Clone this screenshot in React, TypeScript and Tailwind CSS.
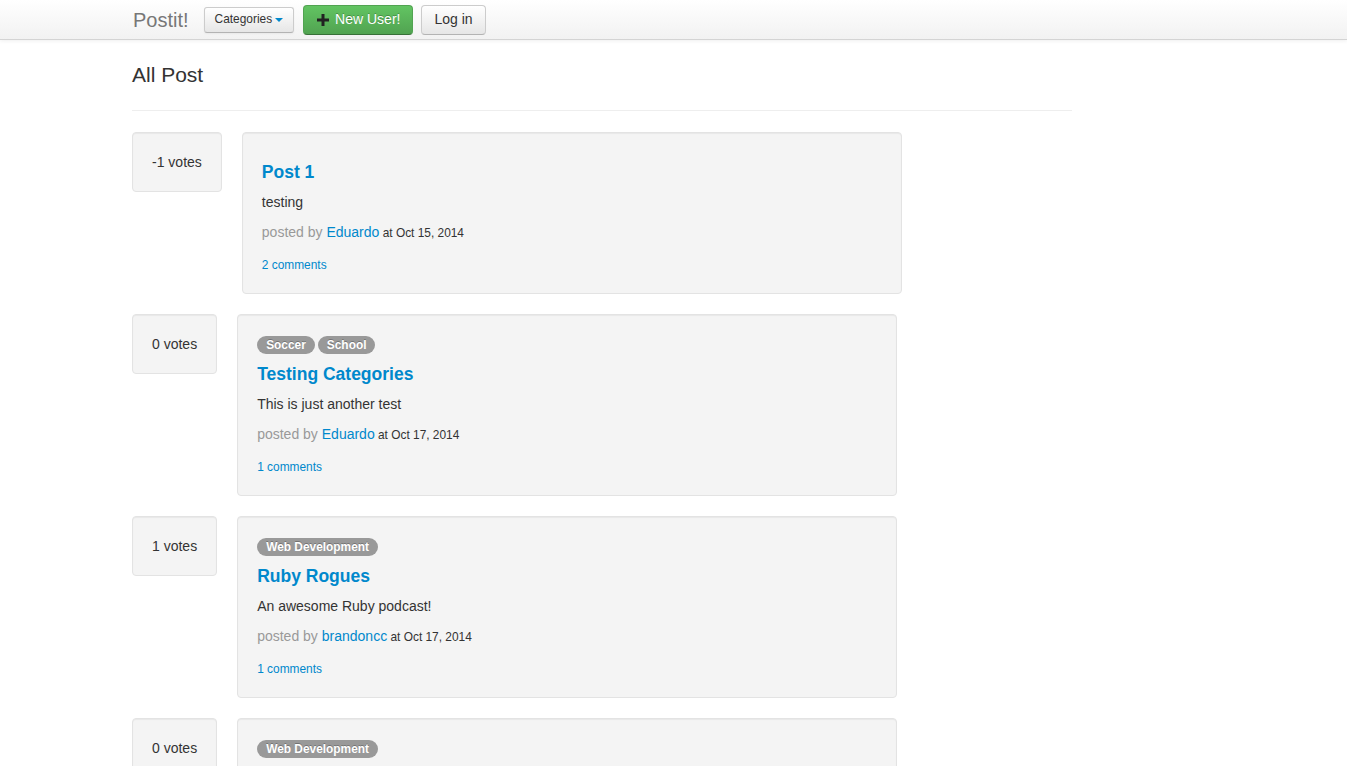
import { ReactNode } from "react";

type Post = {
  votes: number;
  title: string;
  body: string;
  author: string;
  date: string;
  comments: number;
  categories: string[];
};

const posts: Post[] = [
  { votes: -1, title: "Post 1", body: "testing", author: "Eduardo", date: "Oct 15, 2014", comments: 2, categories: [] },
  { votes: 0, title: "Testing Categories", body: "This is just another test", author: "Eduardo", date: "Oct 17, 2014", comments: 1, categories: ["Soccer", "School"] },
  { votes: 1, title: "Ruby Rogues", body: "An awesome Ruby podcast!", author: "brandoncc", date: "Oct 17, 2014", comments: 1, categories: ["Web Development"] },
  { votes: 0, title: "Rails Guides", body: "Ruby on Rails guides", author: "brandoncc", date: "Oct 17, 2014", comments: 0, categories: ["Web Development"] },
];

function Well({ className, children }: { className?: string; children: ReactNode }) {
  return (
    <div
      className={
        "rounded-[4px] border border-[#e3e3e3] bg-[#f4f4f4] p-[19px] shadow-[inset_0_1px_1px_rgba(0,0,0,0.05)] " +
        (className ?? "")
      }
    >
      {children}
    </div>
  );
}

function Navbar() {
  return (
    <div className="h-10 w-full border-b border-[#d4d4d4] bg-gradient-to-b from-white to-[#f2f2f2] shadow-[0_1px_4px_rgba(0,0,0,0.065)]">
      <div className="ml-[133px] flex h-[39px] items-center">
        <span className="text-[20px] leading-[20px] text-[#777]">Postit!</span>
        <button className="ml-[15px] flex h-[26px] items-center rounded-[3px] border border-[#ccc] border-b-[#b3b3b3] bg-gradient-to-b from-white to-[#e6e6e6] px-[10px] text-[11.9px] text-[#333] shadow-[inset_0_1px_0_rgba(255,255,255,0.2),0_1px_2px_rgba(0,0,0,0.05)]">
          Categories
          <span className="ml-[3px] mt-[1px] h-0 w-0 border-x-[4px] border-t-[4px] border-x-transparent border-t-[#0088cc]" />
        </button>
        <button className="ml-[9px] flex h-[30px] items-center rounded-[4px] border border-[#51a351] border-b-[#387038] bg-gradient-to-b from-[#62c462] to-[#51a351] px-[12px] text-[14px] text-white [text-shadow:0_-1px_0_rgba(0,0,0,0.25)]">
          <svg width="14" height="14" viewBox="0 0 14 14" className="mr-[5px]">
            <path d="M5.5 1h3v4.5H13v3H8.5V13h-3V8.5H1v-3h4.5z" fill="#222" />
          </svg>
          New User!
        </button>
        <button className="ml-[8px] flex h-[30px] items-center rounded-[4px] border border-[#ccc] border-b-[#b3b3b3] bg-gradient-to-b from-white to-[#e6e6e6] px-[12px] text-[14px] text-[#333]">
          Log in
        </button>
      </div>
    </div>
  );
}

function PostRow({ post }: { post: Post }) {
  return (
    <div className="mb-[20px] flex items-start">
      <Well className="leading-[20px]">{post.votes} votes</Well>
      <Well className="ml-[20px] w-[660px]">
        {post.categories.length > 0 && (
          <div className="flex h-[20px] items-center gap-[3px] pt-[2px]">
            {post.categories.map((c) => (
              <span
                key={c}
                className="rounded-[9px] bg-[#999] px-[9px] py-[2px] text-[11.9px] font-bold leading-[14px] text-white [text-shadow:0_-1px_0_rgba(0,0,0,0.25)]"
              >
                {c}
              </span>
            ))}
          </div>
        )}
        <h4 className="my-[10px] text-[17.5px] font-bold leading-[20px] text-[#0088cc]">{post.title}</h4>
        <p className="mb-[10px] leading-[20px]">{post.body}</p>
        <p className="mb-[10px] leading-[20px]">
          <span className="text-[#999]">posted by </span>
          <span className="text-[#0088cc]">{post.author}</span>
          <span className="text-[11.9px]"> at {post.date}</span>
        </p>
        <p className="pt-[4px] text-[11.9px] leading-[17px] text-[#0088cc]">{post.comments} comments</p>
      </Well>
    </div>
  );
}

export default function App() {
  return (
    <div className="min-h-screen bg-white font-['Liberation_Sans',Arial,sans-serif] text-[14px] text-[#333]">
      <Navbar />
      <div className="ml-[132px] w-[940px]">
        <h3 className="mt-[20px] text-[21px] leading-[30px]">All Post</h3>
        <hr className="mb-[21px] mt-[20px] border-t border-[#eee]" />
        {posts.map((p, i) => (
          <PostRow key={i} post={p} />
        ))}
      </div>
    </div>
  );
}
